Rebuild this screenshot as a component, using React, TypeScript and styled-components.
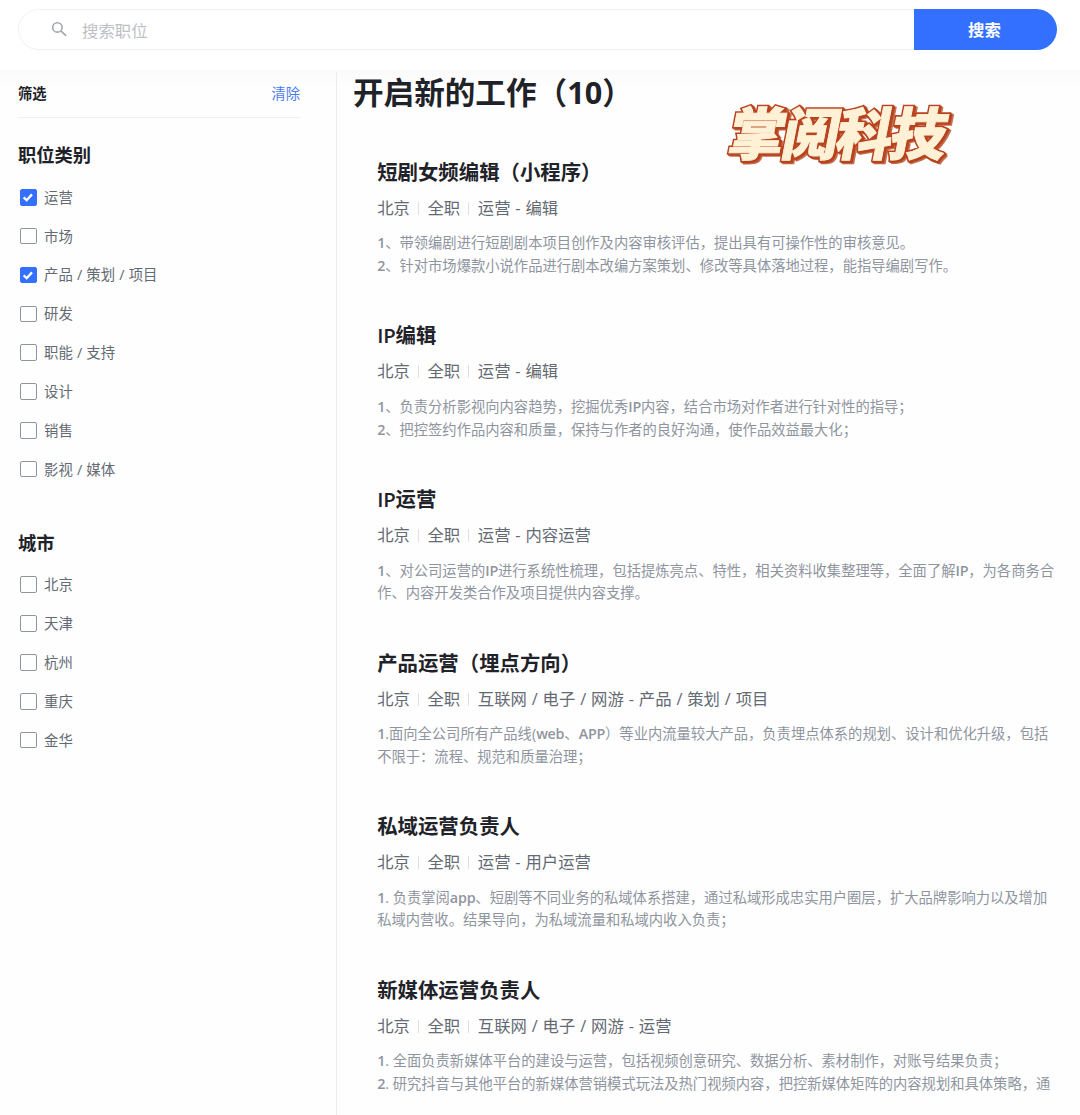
import React, { useState } from "react";
import styled, { createGlobalStyle } from "styled-components";

const GlobalStyle = createGlobalStyle`
  * { box-sizing: border-box; }
  body {
    margin: 0;
    background: #fefefe;
    font-family: "Open Sans", "Noto Sans CJK SC", sans-serif;
    text-spacing-trim: space-all;
    overflow: hidden;
  }
`;

const Page = styled.div`
  width: 1080px;
  height: 1115px;
  overflow: hidden;
  display: flex;
  flex-direction: column;
`;

const Header = styled.header`
  height: 70px;
  flex: none;
  padding: 9px 23.5px 20px 18px;
  display: flex;
  background: #fff;
`;

const SearchField = styled.label`
  flex: 1;
  display: flex;
  align-items: center;
  gap: 14px;
  padding-left: 32px;
  border: 1px solid #f1f2f4;
  border-right: 0;
  border-radius: 21px 0 0 21px;
`;

const SearchInput = styled.input`
  flex: 1;
  height: 32px;
  padding: 2px 0 0;
  border: 0;
  outline: 0;
  background: transparent;
  font: 400 16.4px "Open Sans", "Noto Sans CJK SC", sans-serif;
  color: #1f2329;
  &::placeholder { color: #bdc0c5; opacity: 1; }
`;

const SearchButton = styled.button`
  width: 143px;
  border: 0;
  padding: 0 1px 2px 0;
  border-radius: 0 21px 21px 0;
  background: #3370ff;
  color: #fff;
  font: 700 16.4px "Open Sans", "Noto Sans CJK SC", sans-serif;
`;

const Body = styled.div`
  flex: 1;
  min-height: 0;
  display: flex;
  background: linear-gradient(#f9f9f9, #fcfcfc 6px, #fefefe 18px);
`;

const Sidebar = styled.aside`
  width: 337px;
  flex: none;
  padding: 0 36px 0 18px;
  margin-top: 2px;
  border-right: 1px solid #ebecee;
`;

const FilterHead = styled.div`
  height: 45.6px;
  padding-bottom: 3px;
  display: flex;
  align-items: center;
  justify-content: space-between;
  border-bottom: 1px solid #eff0f2;
  font-size: 14.3px;
`;

const FilterTitle = styled.span`
  font-weight: 700;
  color: #1f2329;
`;

const ClearLink = styled.span`
  color: #4b7cf3;
`;

const Group = styled.section<{ $top: number }>`
  padding-top: ${(p) => p.$top}px;
`;

const GroupTitle = styled.h2`
  margin: 0;
  height: 36.6px;
  line-height: 28px;
  font-size: 18.3px;
  font-weight: 700;
  color: #1f2329;
`;

const Option = styled.div`
  height: 38.85px;
  display: flex;
  align-items: center;
  gap: 7.5px;
  padding-left: 2px;
  font-size: 14.4px;
  word-spacing: 0.4px;
  color: #646a73;
  cursor: pointer;
`;

const OptionName = styled.span`
  padding-bottom: 2px;
`;

const Box = styled.span<{ $on: boolean }>`
  width: 16.5px;
  height: 16.5px;
  flex: none;
  display: flex;
  align-items: center;
  justify-content: center;
  border-radius: 2px;
  border: 1px solid ${(p) => (p.$on ? "#3370ff" : "#8f959e")};
  background: ${(p) => (p.$on ? "#3370ff" : "#fff")};
`;

const Main = styled.main`
  flex: 1;
  min-width: 0;
  padding-left: 16px;
`;

const Hero = styled.div`
  height: 89.8px;
  position: relative;
`;

const HeroTitle = styled.h1`
  margin: 0;
  line-height: 44px;
  font-size: 30.6px;
  font-weight: 700;
  color: #1f2329;
  white-space: nowrap;
`;

const Brand = styled.svg`
  position: absolute;
  left: 365px;
  top: 26px;
  overflow: visible;
`;

const Job = styled.article`
  height: 163.6px;
  padding-left: 24.2px;
`;

const JobTitle = styled.h3`
  margin: 0;
  height: 36px;
  line-height: 24px;
  font-size: 20.4px;
  font-weight: 700;
  color: #1f2329;
  white-space: nowrap;
`;

const Meta = styled.div`
  height: 36.6px;
  line-height: 24px;
  display: flex;
  font-size: 16.35px;
  word-spacing: 0.65px;
  color: #646a73;
  white-space: nowrap;
`;

const Divider = styled.i`
  width: 1px;
  height: 13px;
  margin: 6px 8.3px 0;
  background: #dee0e3;
`;

const Line = styled.p`
  margin: 0;
  line-height: 22.7px;
  font-size: 14.3px;
  color: #8f959e;
  white-space: nowrap;
`;

const Latin = styled.span`
  font-weight: 600;
  letter-spacing: -0.2px;
`;

const categories = ["运营", "市场", "产品 / 策划 / 项目", "研发", "职能 / 支持", "设计", "销售", "影视 / 媒体"];
const cities = ["北京", "天津", "杭州", "重庆", "金华"];

const jobs = [
  {
    title: "短剧女频编辑（小程序）",
    kind: "运营 - 编辑",
    lines: [
      "1、带领编剧进行短剧剧本项目创作及内容审核评估，提出具有可操作性的审核意见。",
      "2、针对市场爆款小说作品进行剧本改编方案策划、修改等具体落地过程，能指导编剧写作。",
    ],
  },
  {
    title: "IP编辑",
    kind: "运营 - 编辑",
    lines: [
      "1、负责分析影视向内容趋势，挖掘优秀IP内容，结合市场对作者进行针对性的指导；",
      "2、把控签约作品内容和质量，保持与作者的良好沟通，使作品效益最大化；",
    ],
  },
  {
    title: "IP运营",
    kind: "运营 - 内容运营",
    lines: [
      "1、对公司运营的IP进行系统性梳理，包括提炼亮点、特性，相关资料收集整理等，全面了解IP，为各商务合",
      "作、内容开发类合作及项目提供内容支撑。",
    ],
  },
  {
    title: "产品运营（埋点方向）",
    kind: "互联网 / 电子 / 网游 - 产品 / 策划 / 项目",
    lines: [
      "1.面向全公司所有产品线(web、APP）等业内流量较大产品，负责埋点体系的规划、设计和优化升级，包括",
      "不限于：流程、规范和质量治理；",
    ],
  },
  {
    title: "私域运营负责人",
    kind: "运营 - 用户运营",
    lines: [
      "1. 负责掌阅app、短剧等不同业务的私域体系搭建，通过私域形成忠实用户圈层，扩大品牌影响力以及增加",
      "私域内营收。结果导向，为私域流量和私域内收入负责；",
    ],
  },
  {
    title: "新媒体运营负责人",
    kind: "互联网 / 电子 / 网游 - 运营",
    lines: [
      "1. 全面负责新媒体平台的建设与运营，包括视频创意研究、数据分析、素材制作，对账号结果负责；",
      "2. 研究抖音与其他平台的新媒体营销模式玩法及热门视频内容，把控新媒体矩阵的内容规划和具体策略，通",
    ],
  },
];

function Mixed({ text }: { text: string }) {
  return (
    <>
      {text.split(/([A-Za-z0-9]+)/).map((part, i) =>
        i % 2 ? <Latin key={i}>{part}</Latin> : part
      )}
    </>
  );
}

function OptionList({ items, initial }: { items: string[]; initial: string[] }) {
  const [selected, setSelected] = useState(initial);
  const toggle = (name: string) =>
    setSelected((s) => (s.includes(name) ? s.filter((n) => n !== name) : [...s, name]));
  return (
    <>
      {items.map((name) => {
        const on = selected.includes(name);
        return (
          <Option key={name} onClick={() => toggle(name)}>
            <Box $on={on}>
              {on && (
                <svg width="12" height="12" viewBox="0 0 12 12" fill="none" stroke="#fff" strokeWidth="2.3">
                  <path d="M1.6 6.4 4.7 9.2 10 3.4" />
                </svg>
              )}
            </Box>
            <OptionName>{name}</OptionName>
          </Option>
        );
      })}
    </>
  );
}

function BrandMark() {
  const text = {
    x: 0,
    y: 0,
    fontFamily: '"Noto Sans CJK SC", sans-serif',
    fontWeight: 900,
    fontSize: 56.5,
    letterSpacing: -2.6,
    strokeLinejoin: "miter" as const,
    strokeMiterlimit: 2,
  };
  return (
    <Brand width="240" height="70" viewBox="0 0 240 70">
      <g transform="translate(7.5 59) skewX(-11)">
        <text {...text} transform="translate(3.2 2)" fill="#c0714f" stroke="#c0714f" strokeWidth="4">掌阅科技</text>
        <text {...text} transform="translate(1.5 1)" fill="#b9431f" stroke="#b9431f" strokeWidth="4">掌阅科技</text>
        <text {...text} fill="#b9431f" stroke="#b9431f" strokeWidth="4">掌阅科技</text>
        <text {...text} fill="#fff1d6" stroke="#fff1d6" strokeWidth="0.9">掌阅科技</text>
      </g>
    </Brand>
  );
}

export default function App() {
  return (
    <Page>
      <GlobalStyle />
      <Header>
        <SearchField>
          <svg width="17" height="17" viewBox="0 0 17 17" fill="none" stroke="#a3a7ad" strokeWidth="1.6">
            <circle cx="6.4" cy="6.4" r="4.7" />
            <path d="M9.8 9.8 15.2 14.9" />
          </svg>
          <SearchInput placeholder="搜索职位" />
        </SearchField>
        <SearchButton>搜索</SearchButton>
      </Header>
      <Body>
        <Sidebar>
          <FilterHead>
            <FilterTitle>筛选</FilterTitle>
            <ClearLink>清除</ClearLink>
          </FilterHead>
          <Group $top={23.7}>
            <GroupTitle>职位类别</GroupTitle>
            <OptionList items={categories} initial={["运营", "产品 / 策划 / 项目"]} />
          </Group>
          <Group $top={40.1}>
            <GroupTitle>城市</GroupTitle>
            <OptionList items={cities} initial={[]} />
          </Group>
        </Sidebar>
        <Main>
          <Hero>
            <HeroTitle>开启新的工作（10）</HeroTitle>
            <BrandMark />
          </Hero>
          {jobs.map((job) => (
            <Job key={job.title}>
              <JobTitle><Mixed text={job.title} /></JobTitle>
              <Meta>
                北京
                <Divider />
                全职
                <Divider />
                {job.kind}
              </Meta>
              {job.lines.map((line) => (
                <Line key={line}><Mixed text={line} /></Line>
              ))}
            </Job>
          ))}
        </Main>
      </Body>
    </Page>
  );
}
